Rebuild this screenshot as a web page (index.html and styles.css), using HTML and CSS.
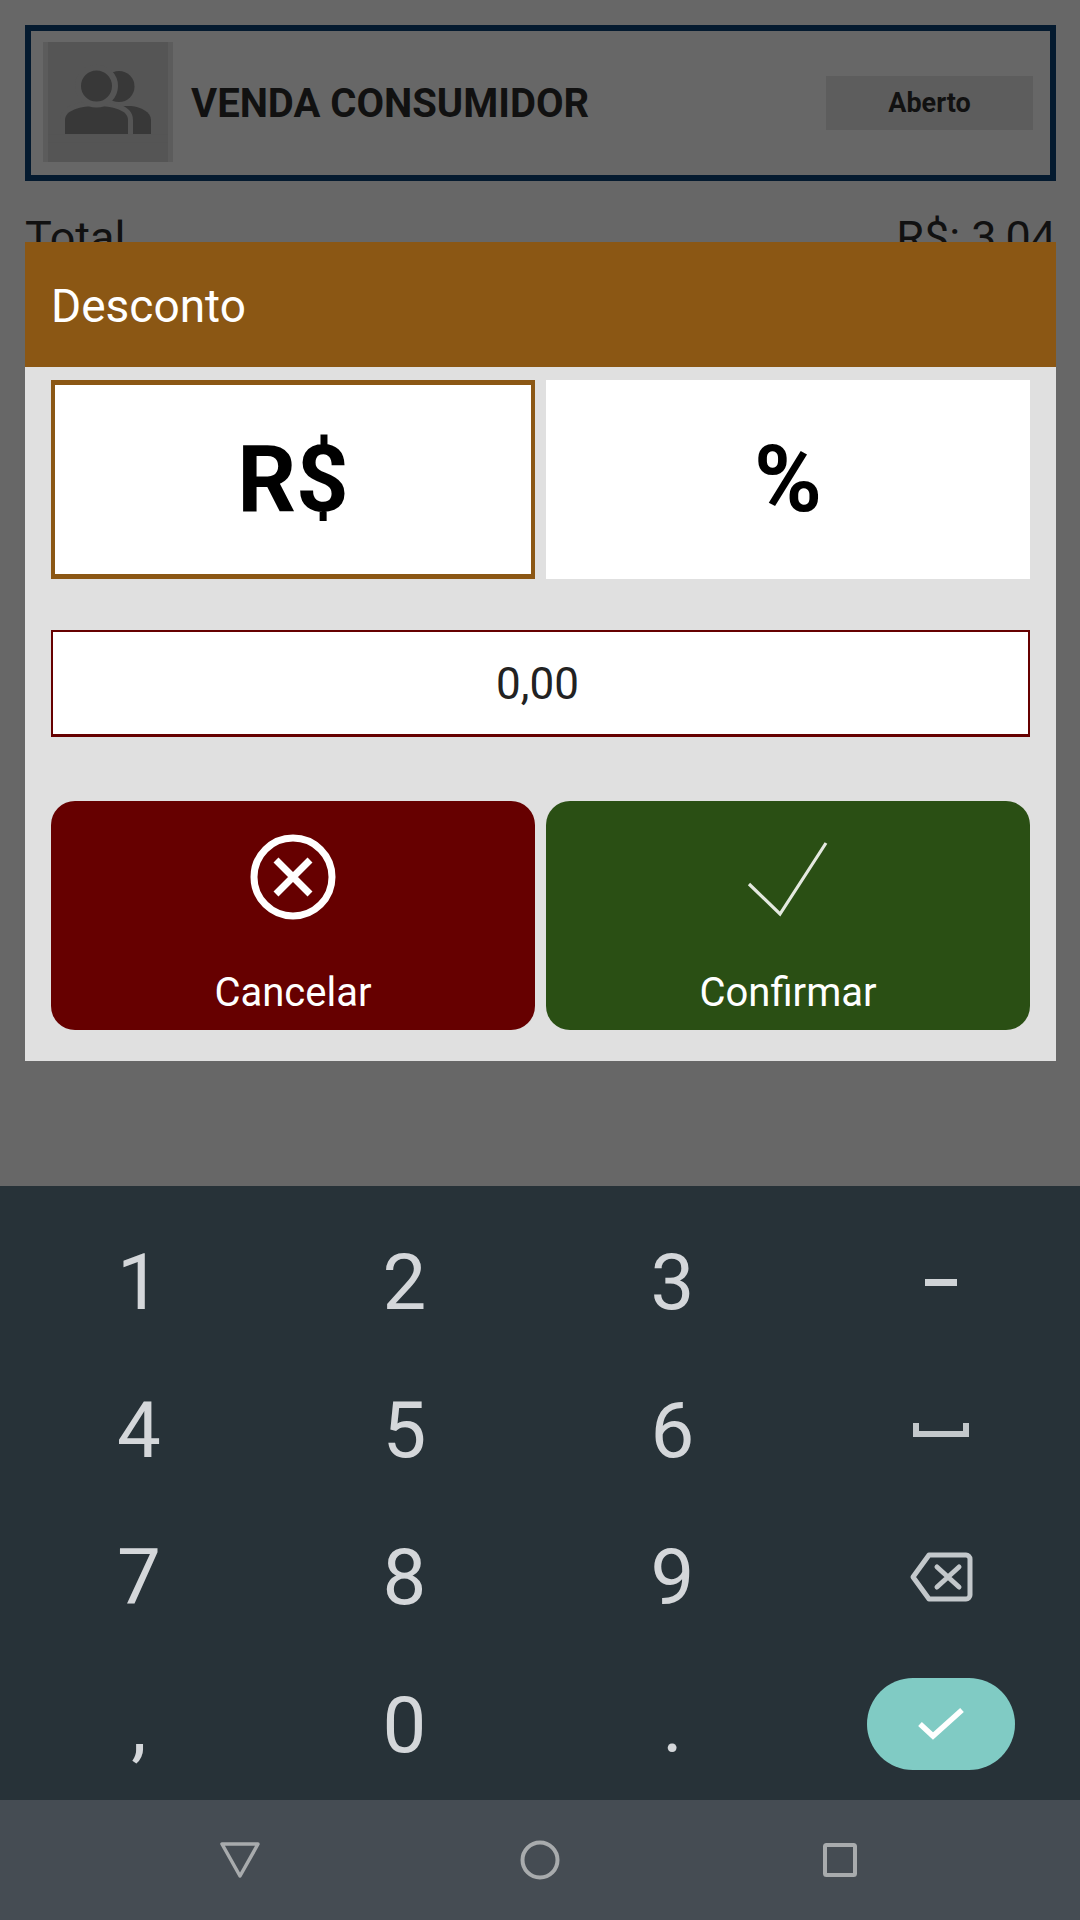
FILE: index.html
```html
<!DOCTYPE html>
<html>

<head>
    <title>Desconto</title>
    <link rel="stylesheet" href="styles.css">
</head>

<body>
    <div class="screen">
        <div class="content">
            <div class="client-card">
                <div class="avatar">
                    <div class="avatar-inner">
                        <svg class="avatar-icon" viewBox="0 0 120 120">
                            <circle cx="71" cy="44.500" r="15.500" fill="#383838" />
                            <path d="M75 92V64h8c10 1 20 6 20 14v14z" fill="#383838" />
                            <path d="M17 92V78c0-10 16-14 31.500-14S80 68 80 78v14z" fill="#383838" stroke="#555" stroke-width="10" paint-order="stroke" />
                            <rect x="0" y="92.500" width="120" height="8" fill="#555" />
                            <circle cx="48.500" cy="44" r="15.500" fill="#383838" stroke="#555" stroke-width="12" paint-order="stroke" />
                        </svg>
                    </div>
                </div>
                <div class="client-name">VENDA CONSUMIDOR</div>
                <div class="status">Aberto</div>
            </div>
            <div class="total-row">
                <span>Total</span>
                <span>R$: 3,04</span>
            </div>
        </div>

        <div class="dialog">
            <div class="dialog-title">Desconto</div>
            <div class="dialog-body">
                <div class="two-cols">
                    <div class="toggle selected">R$</div>
                    <div class="toggle">%</div>
                </div>
                <div class="value-input">0,00</div>
                <div class="two-cols actions">
                    <div class="action cancel">
                        <svg class="action-icon" viewBox="0 0 100 100">
                            <circle cx="50" cy="50" r="39" fill="none" stroke="#fff" stroke-width="7" />
                            <path d="M33 33L67 67M67 33L33 67" fill="none" stroke="#fff" stroke-width="7" />
                        </svg>
                        <span>Cancelar</span>
                    </div>
                    <div class="action confirm">
                        <svg class="action-icon" viewBox="0 0 100 100">
                            <path d="M11 57L42 87L88 16" fill="none" stroke="#e4e9e0" stroke-width="3.200" />
                        </svg>
                        <span>Confirmar</span>
                    </div>
                </div>
            </div>
        </div>

        <div class="keyboard">
            <div class="key">1</div>
            <div class="key">2</div>
            <div class="key">3</div>
            <div class="key"><span class="minus"></span></div>
            <div class="key">4</div>
            <div class="key">5</div>
            <div class="key">6</div>
            <div class="key">
                <svg class="space-icon" viewBox="0 0 56 14">
                    <path d="M0 0h6v8h44V0h6v14H0z" fill="#c3c8cb" />
                </svg>
            </div>
            <div class="key">7</div>
            <div class="key">8</div>
            <div class="key">9</div>
            <div class="key">
                <svg class="back-icon" viewBox="0 0 64 50">
                    <path d="M20 3H57a4 4 0 0 1 4 4V43a4 4 0 0 1-4 4H20L4 25z" fill="none" stroke="#c3c8cb" stroke-width="5" stroke-linejoin="round" />
                    <path d="M28 15L50 35M50 15L28 35" fill="none" stroke="#c3c8cb" stroke-width="5" stroke-linecap="round" />
                </svg>
            </div>
            <div class="key">,</div>
            <div class="key">0</div>
            <div class="key">.</div>
            <div class="key">
                <div class="go">
                    <svg class="go-icon" viewBox="0 0 46 34">
                        <path d="M2 17L15 29L44 3" fill="none" stroke="#fff" stroke-width="5.500" />
                    </svg>
                </div>
            </div>
        </div>

        <div class="navbar">
            <svg class="nav-icon" viewBox="0 0 40 36">
                <path d="M2 2H38L20 34z" fill="none" stroke="#a8abad" stroke-width="3.500" stroke-linejoin="round" />
            </svg>
            <svg class="nav-icon" viewBox="0 0 40 40">
                <circle cx="20" cy="20" r="17.500" fill="none" stroke="#a8abad" stroke-width="4" />
            </svg>
            <svg class="nav-icon" viewBox="0 0 40 40">
                <rect x="5" y="5" width="30" height="30" rx="1.500" fill="none" stroke="#a8abad" stroke-width="4" />
            </svg>
        </div>
    </div>
</body>

</html>
```

FILE: styles.css
```css
* {
    box-sizing: border-box;
}

body {
    margin: 0;
    font-family: Roboto, "Liberation Sans", sans-serif;
}

.screen {
    position: relative;
    width: 1080px;
    height: 1920px;
    display: flex;
    flex-direction: column;
    overflow: hidden;
    background: #676767;
}

.content {
    flex: 1;
    padding: 25px 24px 0 25px;
}

.client-card {
    height: 156px;
    display: flex;
    align-items: center;
    padding: 0 17px 0 12px;
    border: 6px solid #041a2f;
}

.avatar {
    width: 130px;
    height: 120px;
    margin-top: -3px;
    padding: 0 5px;
    background: #5c5c5c;
}

.avatar-inner {
    width: 120px;
    height: 120px;
    background: #555;
}

.avatar-icon {
    display: block;
    width: 120px;
    height: 120px;
}

.client-name {
    flex: 1;
    margin-left: 18px;
    font-size: 40px;
    font-weight: 700;
    color: #111;
}

.status {
    width: 207px;
    height: 54px;
    line-height: 54px;
    margin-top: -1px;
    text-align: center;
    font-size: 27px;
    font-weight: 700;
    color: #111;
    background: #5d5d5d;
}

.total-row {
    display: flex;
    justify-content: space-between;
    margin-top: 30px;
    font-size: 45px;
    color: #111;
}

/* dialog sits over the dimmed page */
.dialog {
    position: absolute;
    left: 25px;
    top: 242px;
    width: 1031px;
    height: 819px;
    background: #e0e0e0;
}

.dialog-title {
    height: 125px;
    line-height: 128px;
    padding-left: 26px;
    font-size: 46px;
    color: #fff;
    background: #8b5714;
}

.dialog-body {
    padding: 13px 26px 0;
}

.two-cols {
    display: grid;
    grid-template-columns: 484px 484px;
    gap: 11px;
}

.toggle {
    height: 199px;
    display: flex;
    align-items: center;
    justify-content: center;
    font-size: 92px;
    font-weight: 700;
    color: #000;
    background: #fff;
}

.toggle.selected {
    border: solid #8b5714;
    border-width: 5px 4px;
}

.value-input {
    height: 107px;
    margin-top: 51px;
    padding-right: 6px;
    padding-top: 1px;
    display: flex;
    align-items: center;
    justify-content: center;
    font-size: 44px;
    color: #222;
    background: #fff;
    border: solid #660000;
    border-width: 2px 2px 3px;
}

.actions {
    margin-top: 64px;
}

.action {
    height: 229px;
    display: flex;
    flex-direction: column;
    align-items: center;
    padding-top: 26px;
    font-size: 40px;
    color: #fff;
    border-radius: 24px;
}

.action.cancel {
    background: #660000;
}

.action.confirm {
    background: #2a4f14;
}

.action-icon {
    width: 100px;
    height: 100px;
    margin-bottom: 42px;
}

.keyboard {
    height: 614px;
    padding: 23px 4px 0 7.500px;
    display: grid;
    grid-template-columns: 263px repeat(3, 268px);
    grid-auto-rows: 147.500px;
    background: #273238;
}

.key {
    display: flex;
    align-items: center;
    justify-content: center;
    font-size: 78px;
    color: #d4d7da;
}

.minus {
    width: 32px;
    height: 7px;
    background: #cfd3d6;
}

.space-icon {
    width: 56px;
    height: 14px;
}

.back-icon {
    width: 64px;
    height: 50px;
    margin-top: -2px;
}

.go {
    width: 148px;
    height: 92px;
    margin-top: -2px;
    display: flex;
    align-items: center;
    justify-content: center;
    border-radius: 46px;
    background: #80cbc4;
}

.go-icon {
    width: 46px;
    height: 34px;
}

.navbar {
    height: 120px;
    padding-right: 6px;
    display: grid;
    grid-template-columns: 480px 120px 480px;
    align-items: center;
    justify-items: center;
    background: #454c53;
}

.nav-icon {
    width: 40px;
    height: 40px;
}
```
